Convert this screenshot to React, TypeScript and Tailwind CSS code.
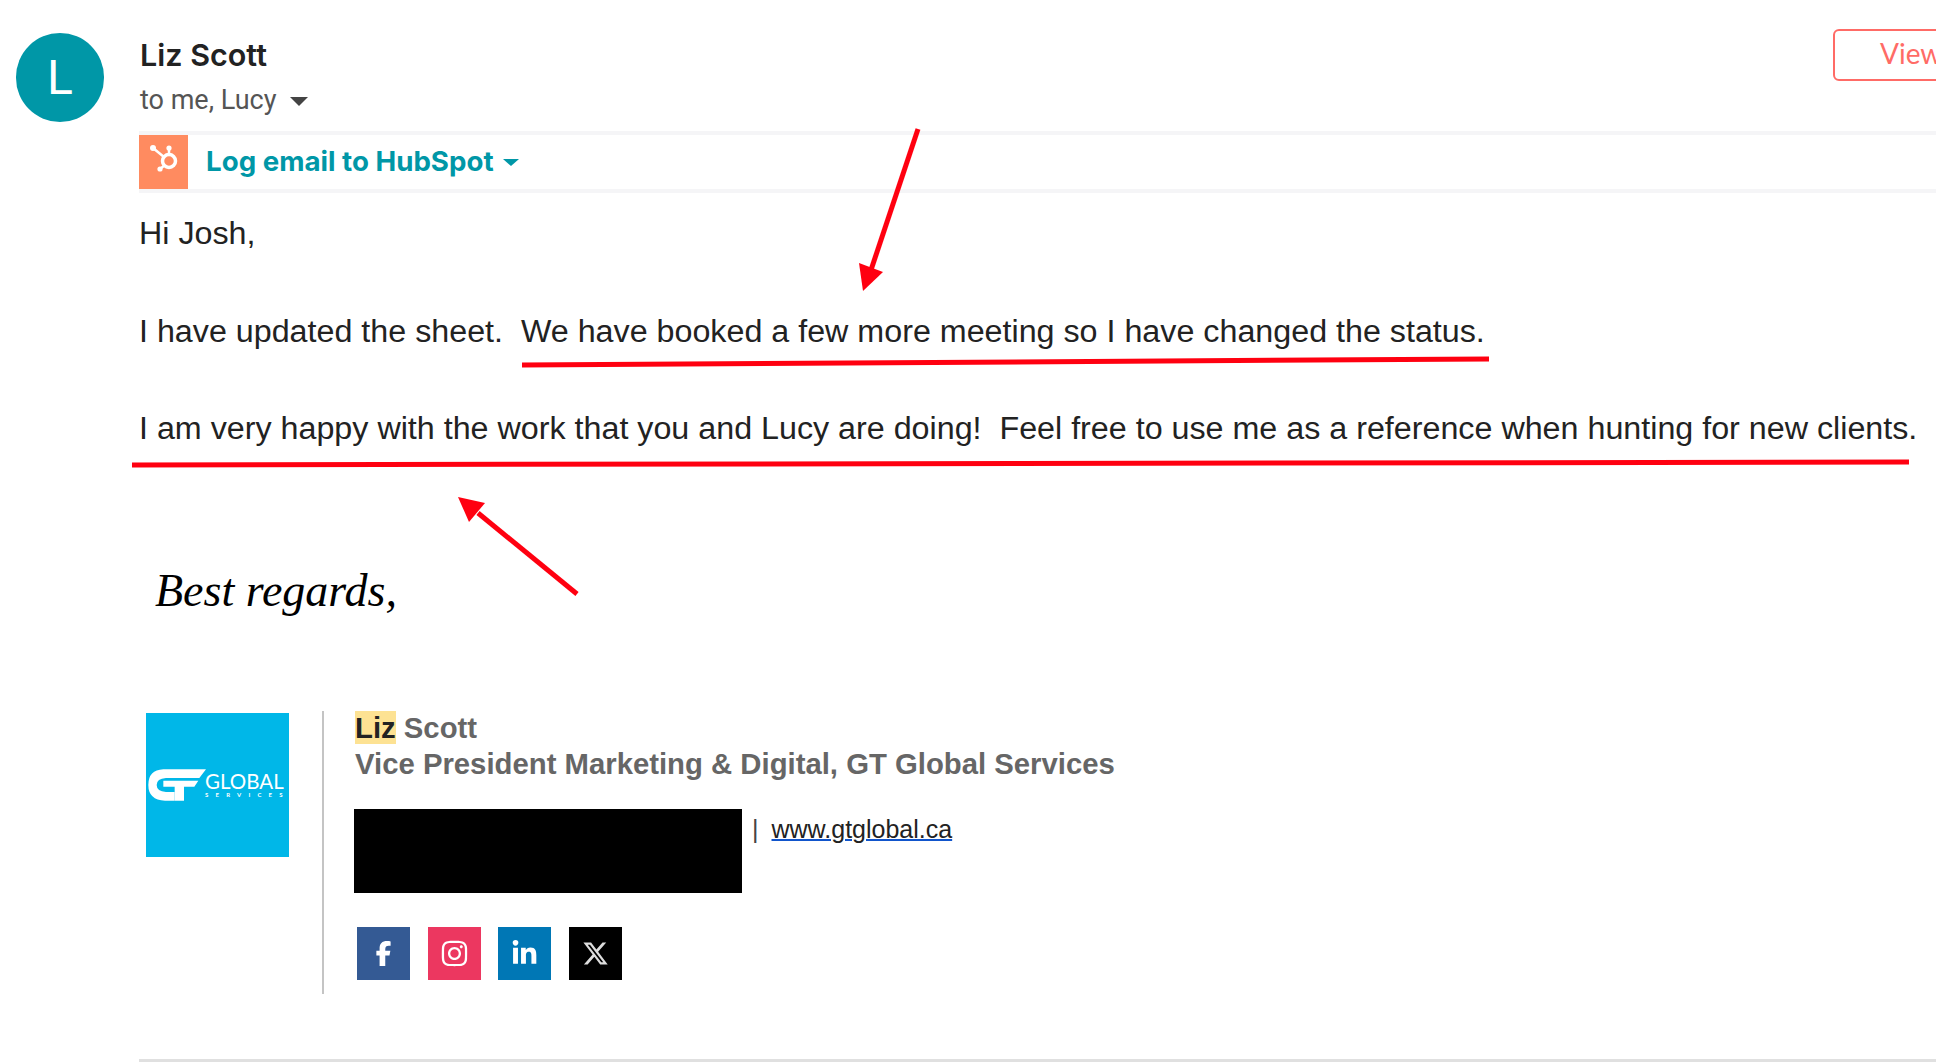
import React from 'react';
import { FaFacebookF, FaInstagram, FaLinkedinIn, FaXTwitter } from 'react-icons/fa6';

const bodyFont = "font-['Liberation_Sans',Arial,sans-serif]";

function HubSpotIcon() {
  return (
    <svg width="49" height="54" viewBox="0 0 49 54" fill="none">
      <circle cx="30" cy="26" r="6.5" stroke="#fff" strokeWidth="3.5" />
      <path d="M14 13 L25 22 M30 13 V19 M21 34 L26 30" stroke="#fff" strokeWidth="2.5" />
      <circle cx="14" cy="13" r="3" fill="#fff" />
      <circle cx="30" cy="13" r="2.6" fill="#fff" />
      <circle cx="21" cy="34" r="2.6" fill="#fff" />
    </svg>
  );
}

function GtLogo() {
  return (
    <div className="relative w-[143px] h-[144px] bg-[#00b7e8] shrink-0 mt-[2px] ml-[7px]">
      <svg className="absolute left-0 top-0" width="143" height="144" viewBox="48 69 429 432">
        <path
          d="M100 238 H228 L208 264 H108 Q80 266 80 285 Q80 304 108 306 H134 V332 H105 Q55 330 55 285 Q55 240 100 238 Z"
          fill="#fff"
        />
        <path d="M100 272 H205 L193 290 H162 V332 H134 V290 H100 Z" fill="#fff" />
      </svg>
      <div className="absolute left-[59px] top-[59px] text-white font-['Lato',sans-serif] text-[20.5px] leading-[18px]">
        GLOBAL
      </div>
      <div className="absolute left-[59px] top-[78px] text-white font-['Lato',sans-serif] text-[6px] leading-[7px] font-bold tracking-[7.2px] whitespace-nowrap">
        SERVICES
      </div>
    </div>
  );
}

const socials = [
  { bg: 'bg-[#345a94]', icon: <FaFacebookF size={25} color="#fff" /> },
  { bg: 'bg-[#ec3760]', icon: <FaInstagram size={29} color="#fff" /> },
  { bg: 'bg-[#0077b5]', icon: <FaLinkedinIn size={27} color="#fff" /> },
  { bg: 'bg-black', icon: <FaXTwitter size={27} color="#ddd" /> },
];

export default function App() {
  return (
    <div className="relative w-[1936px] h-[1062px] overflow-hidden bg-white flex items-start">
      {/* Avatar */}
      <div className="ml-[16px] mt-[33px] w-[88px] h-[89px] rounded-full bg-[#0097a7] shrink-0 flex items-center justify-center text-white font-['Roboto',sans-serif] text-[48px] leading-none">
        L
      </div>

      <div className="ml-[35px] mt-[29px] flex-1 min-w-0">
        {/* Header */}
        <div className="flex h-[102px] items-start">
          <div className="pl-[1px]">
            <div className="mt-[8px] font-['Inter',sans-serif] font-semibold text-[30.5px] leading-[36px] text-[#222]">
              Liz Scott
            </div>
            <div className="mt-[11px] flex items-center font-['Roboto',sans-serif] text-[27px] leading-[32px] text-[#555]">
              to me, Lucy
              <span className="ml-[14px] mt-[2px] w-0 h-0 border-x-[9px] border-x-transparent border-t-[9px] border-t-[#444]" />
            </div>
          </div>
          <button className="ml-auto mr-[-97px] w-[200px] h-[52px] shrink-0 border-2 border-[#ff6b66] rounded-[6px] text-[#ff6b66] font-['Lato',sans-serif] text-[28px] leading-[44px] pb-[4px] text-left pl-[45px]">
            View
          </button>
        </div>

        {/* HubSpot bar */}
        <div className="flex items-center h-[62px] border-y-4 border-[#f5f5f7]">
          <div className="w-[49px] h-[54px] bg-[#ff8b60] shrink-0">
            <HubSpotIcon />
          </div>
          <span className="ml-[18px] mb-[3px] font-['Inter',sans-serif] font-bold text-[27.7px] leading-[36px] text-[#0097a7]">
            Log email to HubSpot
          </span>
          <span className="ml-[9px] w-0 h-0 border-x-[8px] border-x-transparent border-t-[7px] border-t-[#0097a7]" />
        </div>

        {/* Message */}
        <div className={`${bodyFont} pt-[16px] text-[#222] text-[32.25px] leading-[48.5px] whitespace-pre`}>
          <p>Hi Josh,</p>
          <p className="mt-[49px]">I have updated the sheet.  We have booked a few more meeting so I have changed the status.</p>
          <p className="mt-[49px]">I am very happy with the work that you and Lucy are doing!  Feel free to use me as a reference when hunting for new clients.</p>
        </div>

        {/* Handwritten sign-off */}
        <div className="mt-[108px] ml-[16px] h-[150px] font-['Liberation_Serif',serif] italic text-[46px] leading-[60px] text-black">
          Best regards,
        </div>

        {/* Signature */}
        <div className="flex h-[283px]">
          <div className="w-[185px] border-r-2 border-[#c4c4c4] shrink-0">
            <GtLogo />
          </div>
          <div className={`${bodyFont} pl-[31px] -mt-[1px]`}>
            <div className="font-bold text-[29.3px] leading-[36px] text-[#666]">
              <div>
                <span className="bg-[#fde293] text-[#222]">Liz</span> Scott
              </div>
              <div className="whitespace-nowrap">Vice President Marketing &amp; Digital, GT Global Services</div>
            </div>
            <div className="mt-[27px] -ml-[1px] flex items-start">
              <div className="w-[388px] h-[84px] bg-black shrink-0" />
              <span className="ml-[10px] mt-[4px] text-[25px] leading-[32px] text-[#444]">|</span>
              <a className="ml-[13px] mt-[4px] text-[25px] leading-[32px] text-[#222] underline decoration-[#1155cc] decoration-2">
                www.gtglobal.ca
              </a>
            </div>
            <div className="mt-[34px] ml-[2px] flex gap-[17.5px]">
              {socials.map((s, i) => (
                <div key={i} className={`${s.bg} w-[53px] h-[53px] flex items-center justify-center`}>
                  {s.icon}
                </div>
              ))}
            </div>
          </div>
        </div>

        <div className="mt-[65px] h-[3px] bg-[#e0e0e0]" />
      </div>

      {/* Red annotations drawn over the mail */}
      <svg className="absolute left-0 top-0 pointer-events-none" width="1936" height="1062" viewBox="0 0 1936 1062">
        <path d="M918 129 L871 270" stroke="#ff0010" strokeWidth="5" />
        <polygon points="859,263 883,272 863,291" fill="#ff0010" />
        <path d="M577 594 L478 513" stroke="#ff0010" strokeWidth="5" />
        <polygon points="458,497 485,503 469,522" fill="#ff0010" />
        <path d="M522 365 L1489 359" stroke="#ff0010" strokeWidth="5" />
        <path d="M132 465 L1909 462" stroke="#ff0010" strokeWidth="5" />
      </svg>
    </div>
  );
}
